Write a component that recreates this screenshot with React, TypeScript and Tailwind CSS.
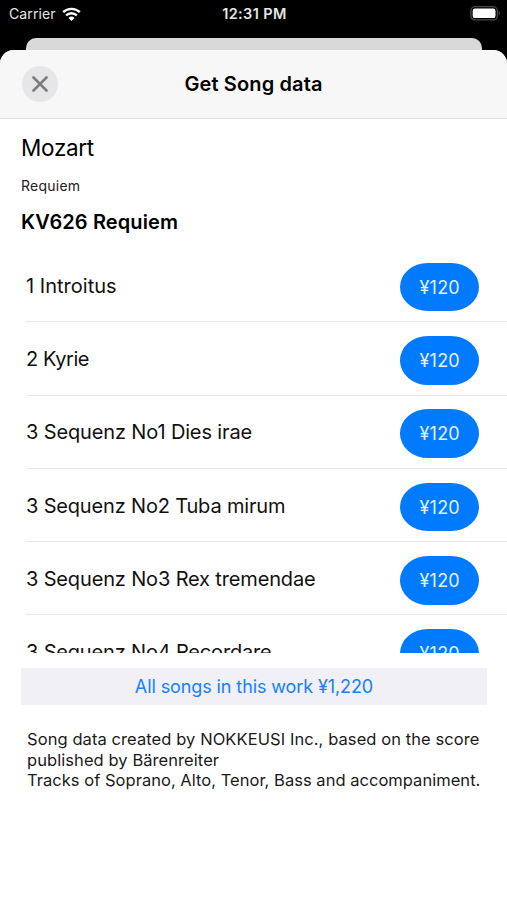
const songs = [
  { title: "1 Introitus", tracking: "tracking-[0.02px]" },
  { title: "2 Kyrie", tracking: "tracking-[-0.42px]" },
  { title: "3 Sequenz No1 Dies irae", tracking: "tracking-[-0.14px]" },
  { title: "3 Sequenz No2 Tuba mirum", tracking: "tracking-[-0.17px]" },
  { title: "3 Sequenz No3 Rex tremendae", tracking: "tracking-[-0.15px]" },
  { title: "3 Sequenz No4 Recordare", tracking: "tracking-[-0.17px]" },
];

function StatusBar() {
  return (
    <div className="grid h-[38px] grid-cols-3 items-start pt-[5px] pr-[6px] pl-[8px] text-[14px] leading-[18px] text-[#e6e6e6]">
      <div className="flex items-center gap-[6px] pl-px">
        <span className="tracking-[0.1px]">Carrier</span>
        <svg width="19" height="15" viewBox="0 0 19 15" fill="none" stroke="#fff" strokeWidth="2.4">
          <path d="M1.2 5.2a12 12 0 0 1 16.6 0" />
          <path d="M4.1 8.4a7.8 7.8 0 0 1 10.8 0" />
          <path d="M9.5 14 6.5 10.9a4.4 4.4 0 0 1 6 0z" fill="#fff" stroke="none" />
        </svg>
      </div>
      <span className="text-center text-[14.5px] font-semibold tracking-[0.4px] whitespace-nowrap">12:31 PM</span>
      <svg className="mt-px justify-self-end" width="31" height="15" viewBox="0 0 31 15">
        <rect x="0.9" y="0.7" width="26.4" height="13.2" rx="4" fill="none" stroke="#4a4a4a" strokeWidth="1.3" />
        <rect x="2.7" y="2.5" width="22.8" height="9.6" rx="2.2" fill="#fff" />
        <path d="M28.6 5c1.8.7 1.8 3.7 0 4.4z" fill="#4a4a4a" />
      </svg>
    </div>
  );
}

export default function App() {
  return (
    <div className="h-[900px] w-[507px] overflow-hidden bg-black font-['Inter',sans-serif] text-black">
      <StatusBar />
      <div className="mr-[25px] ml-[26px] h-3 rounded-t-[10px] bg-[#d9d9d9]" />

      <div className="h-[850px] rounded-t-[14px] bg-white">
        {/* Title bar */}
        <header className="grid h-[69px] grid-cols-[1fr_auto_1fr] items-center rounded-t-[14px] border-b border-[#e2e2e3] bg-[#f7f7f7] px-[22px]">
          <button className="flex size-9 items-center justify-center rounded-full bg-[#e6e6e8]">
            <svg width="16" height="16" viewBox="0 0 16 16" stroke="#7d7d80" strokeWidth="2.6" strokeLinecap="round">
              <path d="M1.5 1.5l13 13M14.5 1.5l-13 13" />
            </svg>
          </button>
          <h1 className="text-[20px] font-semibold tracking-[0.12px]">Get Song data</h1>
        </header>

        {/* Work */}
        <div className="h-[130px] pt-[14px] pl-[21px]">
          <p className="text-[22.5px] leading-[30px] tracking-[-0.3px]">Mozart</p>
          <p className="mt-[13px] text-[14px] leading-[20px] tracking-[0.25px] text-[#222]">Requiem</p>
          <h2 className="mt-[12px] text-[20px] leading-[28px] font-semibold tracking-[0.1px]">KV626 Requiem</h2>
        </div>

        {/* Songs */}
        <ul className="h-[404px] overflow-hidden pl-[26px]">
          {songs.map((song) => (
            <li key={song.title} className="flex h-[73.3px] items-center justify-between border-b border-[#e8e8e9] pt-[4px] pr-[28px]">
              <span className={`pb-[3px] text-[20px] text-[#111] ${song.tracking}`}>{song.title}</span>
              <button className="h-[48.6px] w-[78.6px] rounded-[28px/24.3px] bg-[#007aff] text-[18px] tracking-[0.2px] text-[#e3f1ff]">
                ¥120
              </button>
            </li>
          ))}
        </ul>

        <button className="mt-[15px] ml-[21px] block h-[37px] w-[466px] bg-[#f1f0f6] text-[18px] tracking-[-0.1px] text-[#1680ff]">
          All songs in this work ¥1,220
        </button>

        <div className="mt-[24px] ml-[27px] text-[16.5px] leading-[20.6px] whitespace-nowrap text-[#1a1a1a]">
          <p className="tracking-[0.08px]">Song data created by NOKKEUSI Inc., based on the score</p>
          <p className="tracking-[0.07px]">published by Bärenreiter</p>
          <p className="tracking-[0.03px]">Tracks of Soprano, Alto, Tenor, Bass and accompaniment.</p>
        </div>
      </div>
    </div>
  );
}
